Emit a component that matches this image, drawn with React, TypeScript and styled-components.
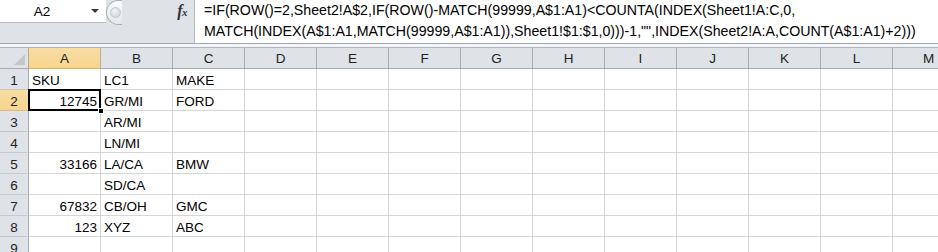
import React from "react";
import styled, { createGlobalStyle, css } from "styled-components";

const GlobalStyle = createGlobalStyle`
  html, body { margin: 0; padding: 0; background: #ffffff; }
  body { font-family: "Liberation Sans", Arial, sans-serif; overflow: hidden; }
`;

const Window = styled.div`
  width: 938px;
  height: 252px;
  overflow: hidden;
  background: #ffffff;
  display: flex;
  flex-direction: column;
`;

const FormulaBar = styled.div`
  display: flex;
  height: 43px;
  flex: none;
  background: #dfe3e8;
  border-bottom: 1px solid #a3a9b0;
`;

const NameColumn = styled.div`
  width: 106px;
  flex: none;
  display: flex;
  flex-direction: column;
`;

const NameBox = styled.div`
  height: 22px;
  background: #ffffff;
  border-bottom: 1px solid #b7bcc2;
  display: flex;
  align-items: center;
  font-size: 13.5px;
  color: #000;
`;

const NameText = styled.span`
  width: 84px;
  text-align: center;
`;

const DropArrow = styled.span`
  width: 0;
  height: 0;
  margin-left: 7px;
  border-left: 4px solid transparent;
  border-right: 4px solid transparent;
  border-top: 4px solid #3a3a3a;
`;

const Middle = styled.div`
  width: 88px;
  flex: none;
  display: flex;
  align-items: flex-start;
`;

const Splitter = styled.div`
  width: 16px;
  height: 25px;
  box-sizing: border-box;
  border: 1px solid #a9aeb5;
  border-right: none;
  border-radius: 13px 0 0 13px;
  background: linear-gradient(#fbfcfd, #e4e7eb);
  display: flex;
  align-items: center;
  padding-left: 3px;
`;

const Dimple = styled.div`
  width: 9px;
  height: 9px;
  border-radius: 50%;
  background: radial-gradient(circle at 40% 35%, #f4f5f7, #c9cdd2);
  border: 1px solid #c4c8cd;
`;

const FxLabel = styled.div`
  margin-left: auto;
  margin-right: 7px;
  margin-top: 2px;
  font-family: "Liberation Serif", "Times New Roman", serif;
  font-style: italic;
  font-weight: bold;
  font-size: 16px;
  color: #333;
  letter-spacing: -0.5px;
`;

const FxSub = styled.span`
  font-size: 11px;
`;

const FormulaInput = styled.div`
  flex: 1;
  background: #ffffff;
  border-left: 1px solid #b7bcc2;
  padding: 0 0 0 9px;
  font-size: 14.2px;
  line-height: 21px;
  color: #000;
  white-space: nowrap;
  overflow: hidden;
`;

const Strip = styled.div`
  height: 3px;
  flex: none;
  background: #f2f4f7;
  border-bottom: 1px solid #b0b5bb;
`;

const Sheet = styled.div`
  display: grid;
  grid-template-columns: 29px repeat(13, 72px);
  grid-auto-rows: 21px;
  font-size: 13.5px;
  color: #000;
`;

const HeadBase = css`
  box-sizing: border-box;
  background: #dfe3e8;
  border-right: 1px solid #a7acb3;
  border-bottom: 1px solid #a7acb3;
  display: flex;
  align-items: center;
  justify-content: center;
  color: #222;
`;

const Corner = styled.div`
  ${HeadBase};
  justify-content: flex-end;
  align-items: flex-end;
  padding: 0 3px 3px 0;
`;

const CornerMark = styled.div`
  width: 11px;
  height: 11px;
  background: #c3c7cc;
  clip-path: polygon(100% 0, 100% 100%, 0 100%);
`;

const ColHead = styled.div<{ $active?: boolean }>`
  ${HeadBase};
  padding-top: 1px;
  ${(p) =>
    p.$active &&
    css`
      background: linear-gradient(#f9dca4, #f7d58e);
      border-bottom-color: #f0b04a;
      border-right-color: #c9b07e;
    `}
`;

const RowHead = styled.div<{ $active?: boolean }>`
  ${HeadBase};
  border-bottom-color: #c5c9ce;
  align-items: flex-end;
  padding-bottom: 1px;
  ${(p) =>
    p.$active &&
    css`
      background: linear-gradient(#f9dca4, #f7d58e);
      border-right-color: #f0b04a;
      border-bottom-color: #d9bb80;
    `}
`;

const Cell = styled.div<{ $num?: boolean; $active?: boolean }>`
  box-sizing: border-box;
  position: relative;
  border-right: 1px solid #d6d6d6;
  border-bottom: 1px solid #d6d6d6;
  display: flex;
  align-items: flex-end;
  justify-content: ${(p) => (p.$num ? "flex-end" : "flex-start")};
  padding: 0 3px 1px 3px;
  white-space: nowrap;
  ${(p) =>
    p.$active &&
    css`
      &::after {
        content: "";
        position: absolute;
        left: -1px;
        top: -1px;
        right: -1px;
        bottom: -1px;
        border: 2px solid #000;
        pointer-events: none;
      }
      &::before {
        content: "";
        position: absolute;
        right: -4px;
        bottom: -4px;
        width: 6px;
        height: 6px;
        background: #000;
        border: 1px solid #fff;
        box-sizing: border-box;
        z-index: 2;
      }
    `}
`;

const columns = ["A", "B", "C", "D", "E", "F", "G", "H", "I", "J", "K", "L", "M"];

const data: string[][] = [
  ["SKU", "LC1", "MAKE"],
  ["12745", "GR/MI", "FORD"],
  ["", "AR/MI", ""],
  ["", "LN/MI", ""],
  ["33166", "LA/CA", "BMW"],
  ["", "SD/CA", ""],
  ["67832", "CB/OH", "GMC"],
  ["123", "XYZ", "ABC"],
  ["", "", ""],
];

const isNum = (v: string) => /^\d+$/.test(v);

export default function App() {
  return (
    <Window>
      <GlobalStyle />
      <FormulaBar>
        <NameColumn>
          <NameBox>
            <NameText>A2</NameText>
            <DropArrow />
          </NameBox>
        </NameColumn>
        <Middle>
          <Splitter>
            <Dimple />
          </Splitter>
          <FxLabel>
            f<FxSub>x</FxSub>
          </FxLabel>
        </Middle>
        <FormulaInput>
          <div>
            =IF(ROW()=2,Sheet2!A$2,IF(ROW()-MATCH(99999,A$1:A1)&lt;COUNTA(INDEX(Sheet1!A:C,0,
          </div>
          <div>
            MATCH(INDEX(A$1:A1,MATCH(99999,A$1:A1)),Sheet1!$1:$1,0)))-1,"",INDEX(Sheet2!A:A,COUNT(A$1:A1)+2)))
          </div>
        </FormulaInput>
      </FormulaBar>
      <Strip />
      <Sheet>
        <Corner>
          <CornerMark />
        </Corner>
        {columns.map((c) => (
          <ColHead key={c} $active={c === "A"}>
            {c}
          </ColHead>
        ))}
        {data.map((row, r) => (
          <React.Fragment key={r}>
            <RowHead $active={r === 1}>{r + 1}</RowHead>
            {columns.map((c, ci) => {
              const v = row[ci] ?? "";
              return (
                <Cell key={c} $num={isNum(v)} $active={r === 1 && ci === 0}>
                  {v}
                </Cell>
              );
            })}
          </React.Fragment>
        ))}
      </Sheet>
    </Window>
  );
}
